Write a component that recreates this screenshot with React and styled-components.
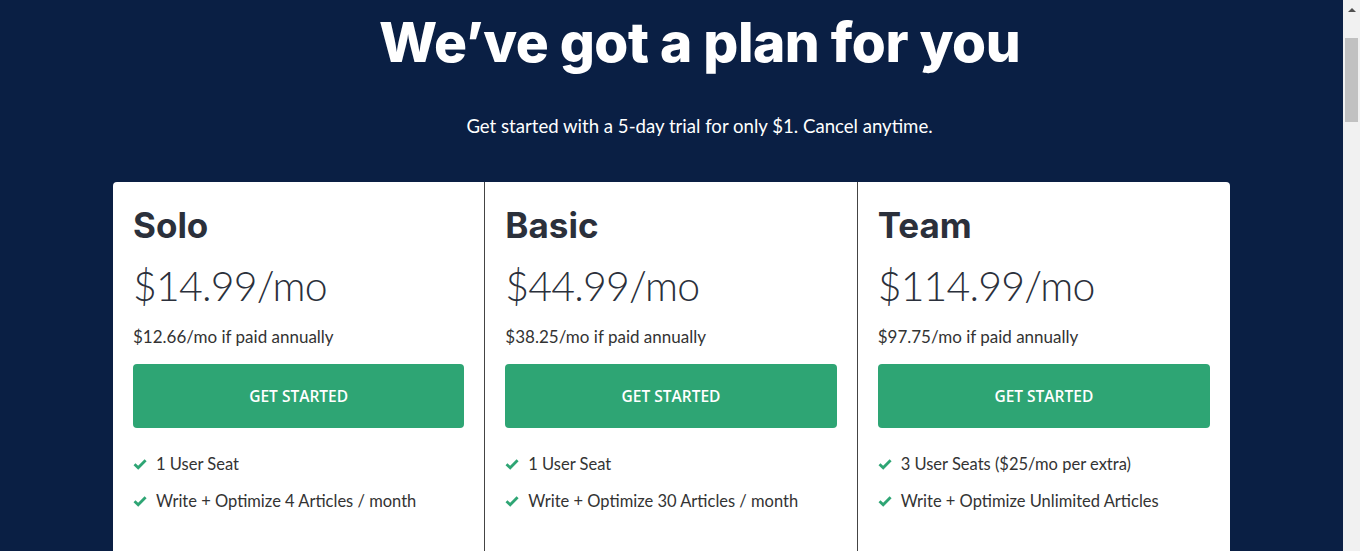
import styled, { createGlobalStyle } from 'styled-components';

const GlobalStyle = createGlobalStyle`
  html, body {
    margin: 0;
    padding: 0;
    background: #0a1f44;
    overflow: hidden;
  }
  body {
    font-family: 'Lato', 'Liberation Sans', sans-serif;
  }
`;

const plans = [
  {
    name: 'Solo',
    price: '$14.99/mo',
    annual: '$12.66/mo if paid annually',
    features: ['1 User Seat', 'Write + Optimize 4 Articles / month'],
  },
  {
    name: 'Basic',
    price: '$44.99/mo',
    annual: '$38.25/mo if paid annually',
    features: ['1 User Seat', 'Write + Optimize 30 Articles / month'],
  },
  {
    name: 'Team',
    price: '$114.99/mo',
    annual: '$97.75/mo if paid annually',
    features: ['3 User Seats ($25/mo per extra)', 'Write + Optimize Unlimited Articles'],
  },
];

const Check = () => (
  <svg width="14" height="12" viewBox="0 0 14 12">
    <path d="M1.5 6.2 L5.2 9.8 L12.6 2.2" fill="none" stroke="#2ea574" strokeWidth="2.8" />
  </svg>
);

const App = () => {
  return (
    <>
      <GlobalStyle />
      <Window>
        <Page>
          <Header>
            <Title>We’ve got a plan for you</Title>
            <Subtitle>Get started with a 5-day trial for only $1. Cancel anytime.</Subtitle>
          </Header>
          <Plans>
            {plans.map((p) => (
              <Plan key={p.name}>
                <PlanName>{p.name}</PlanName>
                <Price>{p.price}</Price>
                <Annual>{p.annual}</Annual>
                <Button type="button">GET STARTED</Button>
                <Features>
                  {p.features.map((f) => (
                    <Feature key={f}>
                      <Check />
                      <span>{f}</span>
                    </Feature>
                  ))}
                </Features>
              </Plan>
            ))}
          </Plans>
        </Page>
        <Scrollbar>
          <ArrowUp />
          <Thumb />
        </Scrollbar>
      </Window>
    </>
  );
};

export default App;

const Window = styled.div`
  display: flex;
  height: 551px;
  overflow: hidden;
`;

const Page = styled.div`
  flex: 1;
  min-width: 0;
  background: #0a1f44;
`;

const Scrollbar = styled.div`
  width: 17px;
  flex-shrink: 0;
  background: #f1f1f1;
  display: flex;
  flex-direction: column;
  align-items: center;
  padding-top: 8px;
  box-sizing: border-box;
`;

const ArrowUp = styled.div`
  width: 0;
  height: 0;
  border-left: 4px solid transparent;
  border-right: 4px solid transparent;
  border-bottom: 4px solid #505050;
`;

const Thumb = styled.div`
  width: 13px;
  height: 84px;
  margin-top: 26px;
  background: #c1c1c1;
`;

const Header = styled.header`
  display: flex;
  flex-direction: column;
  align-items: center;
  padding-left: 56px;
  padding-top: 8px;
`;

const Title = styled.h1`
  margin: 0;
  color: #fff;
  font-family: 'Inter', sans-serif;
  font-weight: 800;
  font-size: 55px;
  line-height: 68px;
  letter-spacing: -0.5px;
`;

const Subtitle = styled.p`
  margin: 38px 0 0;
  color: #fff;
  font-family: 'Lato', sans-serif;
  font-size: 18.6px;
  line-height: 24px;
`;

const Plans = styled.div`
  width: 1117px;
  margin: 44px auto 0;
  display: grid;
  grid-template-columns: repeat(3, 1fr);
  background: #fff;
  border-radius: 4px;
  min-height: 420px;
`;

const Plan = styled.div`
  padding: 22px 20px 20px;
  border-right: 1px solid #444;
  &:last-child {
    border-right: none;
  }
`;

const PlanName = styled.h2`
  margin: 0;
  font-family: 'Inter', sans-serif;
  font-weight: 700;
  font-size: 35px;
  line-height: 42px;
  color: #2b303b;
`;

const Price = styled.div`
  margin-top: 16px;
  font-family: 'Lato', sans-serif;
  font-weight: 300;
  font-size: 41px;
  line-height: 48px;
  letter-spacing: -0.8px;
  color: #2b303b;
`;

const Annual = styled.div`
  margin-top: 16px;
  font-size: 17px;
  line-height: 22px;
  color: #333;
`;

const Button = styled.button`
  display: block;
  width: 100%;
  height: 64px;
  margin-top: 16px;
  border: none;
  border-radius: 4px;
  background: #2ea574;
  color: #fff;
  font-family: 'Open Sans', sans-serif;
  font-weight: 600;
  font-size: 15.5px;
  cursor: pointer;
`;

const Features = styled.ul`
  list-style: none;
  margin: 17px 0 0;
  padding: 0;
`;

const Feature = styled.li`
  display: flex;
  align-items: center;
  gap: 9px;
  height: 37px;
  font-size: 16.5px;
  color: #333;
`;
